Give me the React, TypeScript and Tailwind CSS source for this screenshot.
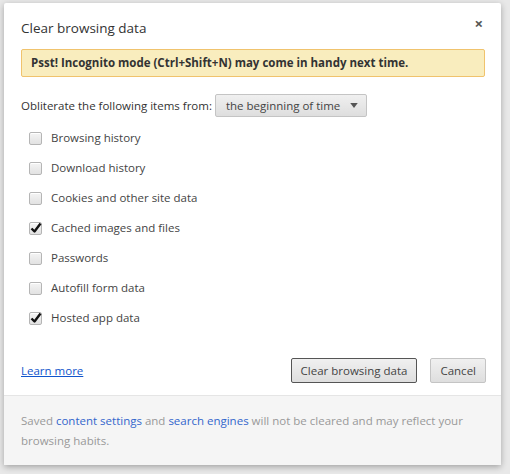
import { useState } from 'react';

const items = [
  { label: 'Browsing history', checked: false },
  { label: 'Download history', checked: false },
  { label: 'Cookies and other site data', checked: false },
  { label: 'Cached images and files', checked: true },
  { label: 'Passwords', checked: false },
  { label: 'Autofill form data', checked: false },
  { label: 'Hosted app data', checked: true },
];

function Checkbox({ checked, onToggle }: { checked: boolean; onToggle: () => void }) {
  return (
    <button
      type="button"
      onClick={onToggle}
      className="relative flex h-[13px] w-[13px] shrink-0 items-center justify-center rounded-[2px] border border-[#b5b5b5] bg-gradient-to-b from-[#f4f4f4] to-[#e2e2e2] shadow-[inset_0_1px_0_#fff]"
    >
      {checked && (
        <svg viewBox="0 0 12 12" className="absolute left-[0px] top-[-1px] h-[12px] w-[12px]">
          <path d="M1.5 6.5 L4.5 9.5 L10.5 1.5" fill="none" stroke="#111" strokeWidth="2.4" strokeLinejoin="round" />
        </svg>
      )}
    </button>
  );
}

function GrayButton({ children, focused }: { children: React.ReactNode; focused?: boolean }) {
  return (
    <button
      type="button"
      className={
        focused
          ? 'h-[25px] rounded-[2px] border border-[#555] bg-gradient-to-b from-[#f0f0f0] to-[#dedede] px-[9px] text-[11.5px] text-[#444]'
          : 'h-[25px] rounded-[2px] border border-[#c4c4c4] bg-gradient-to-b from-[#f0f0f0] to-[#dedede] px-[9px] text-[11.5px] text-[#444]'
      }
    >
      {children}
    </button>
  );
}

export default function App() {
  const [state, setState] = useState(items.map((i) => i.checked));

  return (
    <div className="h-[474px] w-[510px] bg-[#e8e8e8] pl-[4px] pt-[3px] font-['Open_Sans','Noto_Sans',sans-serif] text-[#333]">
      <div className="flex h-[462px] w-[497px] flex-col rounded-[2px] bg-white shadow-[0_2px_6px_rgba(0,0,0,0.3)]">
        <div className="flex-1 pl-[17px] pr-[15px] pt-[14px]">
          <div className="flex items-start justify-between">
            <h1 className="text-[13.5px] leading-[22px] text-[#333]">Clear browsing data</h1>
            <span className="mr-[3px] mt-[-1px] text-[15px] font-bold leading-none text-[#555]">×</span>
          </div>

          <div className="mr-[1px] mt-[10px] rounded-[2px] border border-[#f0c36d] bg-[#f9edbe] px-[9px] py-[5px] text-[11.5px] font-bold leading-[16px] text-[#333]">
            Psst! Incognito mode (Ctrl+Shift+N) may come in handy next time.
          </div>

          <div className="mt-[17px] flex items-center gap-[3px] text-[11.5px]">
            <span>Obliterate the following items from:</span>
            <div className="flex h-[23px] items-center gap-[10px] rounded-[2px] border border-[#c4c4c4] bg-gradient-to-b from-[#f0f0f0] to-[#dedede] pl-[10px] pr-[8px] text-[#444]">
              <span>the beginning of time</span>
              <svg viewBox="0 0 9 6" className="h-[5px] w-[8px]">
                <path d="M0 0 H9 L4.5 6 Z" fill="#555" />
              </svg>
            </div>
          </div>

          <div className="mt-[6px] flex flex-col pl-[8px]">
            {items.map((item, i) => (
              <label key={item.label} className="flex h-[30px] items-center gap-[9px] text-[11.5px] text-[#444]">
                <Checkbox
                  checked={state[i]}
                  onToggle={() => setState((s) => s.map((v, j) => (j === i ? !v : v)))}
                />
                <span>{item.label}</span>
              </label>
            ))}
          </div>

          <div className="mt-[25px] flex items-center justify-between">
            <a className="text-[11.5px] text-[#15c] underline">Learn more</a>
            <div className="flex gap-[13px]">
              <GrayButton focused>Clear browsing data</GrayButton>
              <GrayButton>Cancel</GrayButton>
            </div>
          </div>
        </div>

        <p className="h-[70px] border-t border-[#e5e5e5] bg-[#f5f5f5] pl-[17px] pr-[15px] pt-[15px] text-[11.5px] leading-[20px] text-[#999]">
          Saved <a className="text-[#36c]">content settings</a> and <a className="text-[#36c]">search engines</a> will
          not be cleared and may reflect your browsing habits.
        </p>
      </div>
    </div>
  );
}
